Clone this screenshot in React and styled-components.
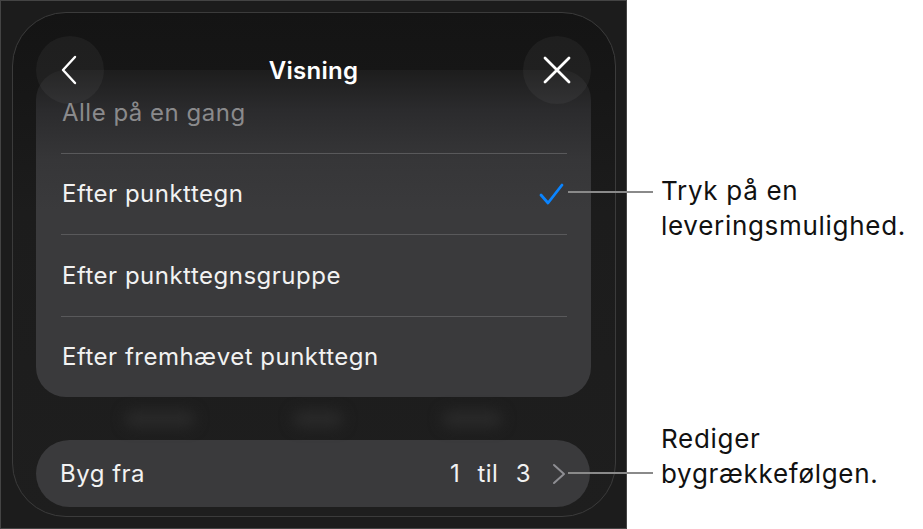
import React from 'react'
import styled, { createGlobalStyle } from 'styled-components'

const Global = createGlobalStyle`
  body {
    margin: 0;
    background: #fff;
    font-family: Inter, 'Noto Sans', sans-serif;
  }
`

const Page = styled.div`
  display: flex;
  width: 923px;
  height: 529px;
  overflow: hidden;
  position: relative;
`

const Stage = styled.div`
  box-sizing: border-box;
  width: 627px;
  height: 529px;
  flex: none;
  background: #1c1c1c;
  border: 1px solid #444;
  padding: 11px;
`

const Sheet = styled.div`
  box-sizing: border-box;
  width: 604px;
  height: 505px;
  border: 1px solid #3b3b3b;
  border-radius: 54px;
  background: linear-gradient(#141414 0px, #161616 60px, #1c1c1c 200px, #1e1e1e 100%);
  padding: 23px 24px 8px 23px;
  display: flex;
  flex-direction: column;
`

const Header = styled.div`
  position: relative;
  z-index: 2;
  height: 68px;
  display: flex;
  align-items: center;
  justify-content: space-between;
`

const RoundButton = styled.div`
  width: 68px;
  height: 68px;
  border-radius: 50%;
  background: rgba(255, 255, 255, 0.045);
  display: flex;
  align-items: center;
  justify-content: center;
`

const Title = styled.div`
  color: #fff;
  font-size: 24px;
  font-weight: 600;
  letter-spacing: 0.3px;
`

const Card = styled.div`
  margin-top: -34px;
  border-radius: 30px;
  background: linear-gradient(#1d1d1d 0px, #2b2b2d 40px, #363638 90px, #3a3a3c 140px);
  display: flex;
  flex-direction: column;
  padding: 0 24px 0 25px;
  height: 327px;
  box-sizing: border-box;
`

const Row = styled.div`
  height: 81px;
  display: flex;
  align-items: center;
  justify-content: space-between;
  padding-left: 1px;
  padding-right: 2px;
  font-size: 24px;
  letter-spacing: 0.5px;
  color: ${p => (p.$dim ? '#8a8a8c' : '#f2f2f2')};
  border-top: ${p => (p.$first ? 'none' : '1px solid #59595b')};
  padding-top: ${p => (p.$first ? '2px' : '0')};
`

const Blur = styled.div`
  height: 43px;
  display: flex;
  justify-content: space-around;
  align-items: center;
  padding: 0 40px;
`

const Blob = styled.div`
  width: ${p => p.$w}px;
  height: 16px;
  border-radius: 8px;
  background: #2a2a2a;
  filter: blur(7px);
`

const BuildButton = styled.div`
  height: 67px;
  border-radius: 34px;
  background: #3a3a3c;
  display: flex;
  align-items: center;
  padding: 0 24px;
  margin-right: 1px;
  font-size: 24px;
  letter-spacing: 0.5px;
  color: #f2f2f2;
`

const BuildLabel = styled.span`
  flex: 1;
`

const Range = styled.span`
  word-spacing: 10px;
  margin-right: 21px;
`

const Notes = styled.div`
  flex: 1;
  padding: 173px 0 0 34px;
  display: flex;
  flex-direction: column;
`

const Callout = styled.div`
  position: relative;
  font-size: 26px;
  letter-spacing: 0.7px;
  line-height: 35px;
  color: #111;
  margin-top: ${p => p.$gap || 0}px;

  &::before {
    content: '';
    position: absolute;
    left: -93px;
    width: 85px;
    height: 2px;
    background: #8a8a8a;
    top: ${p => p.$lineTop}px;
  }
`

const Back = () => (
  <svg width="20" height="30" viewBox="0 0 20 30">
    <path d="M15 2 L3 15 L15 28" fill="none" stroke="#fff" strokeWidth="2.4" strokeLinecap="round" strokeLinejoin="round" />
  </svg>
)

const Close = () => (
  <svg width="30" height="30" viewBox="0 0 30 30">
    <path d="M3 3 L27 27 M27 3 L3 27" fill="none" stroke="#fff" strokeWidth="2.8" strokeLinecap="round" />
  </svg>
)

const Check = () => (
  <svg width="26" height="24" viewBox="0 0 26 24">
    <path d="M2 13 L9 21 L23 3" fill="none" stroke="#0a84ff" strokeWidth="2.8" strokeLinecap="round" strokeLinejoin="round" />
  </svg>
)

const Chevron = () => (
  <svg width="14" height="22" viewBox="0 0 14 22">
    <path d="M2 2 L12 11 L2 20" fill="none" stroke="#8e8e93" strokeWidth="2" strokeLinecap="round" strokeLinejoin="round" />
  </svg>
)

export default function App() {
  return (
    <Page>
      <Global />
      <Stage>
        <Sheet>
          <Header>
            <RoundButton>
              <Back />
            </RoundButton>
            <Title>Visning</Title>
            <RoundButton>
              <Close />
            </RoundButton>
          </Header>
          <Card>
            <Row $first $dim>Alle på en gang</Row>
            <Row>
              Efter punkttegn
              <Check />
            </Row>
            <Row>Efter punkttegnsgruppe</Row>
            <Row>Efter fremhævet punkttegn</Row>
          </Card>
          <Blur>
            <Blob $w={70} />
            <Blob $w={50} />
            <Blob $w={60} />
          </Blur>
          <BuildButton>
            <BuildLabel>Byg fra</BuildLabel>
            <Range>1 til 3</Range>
            <Chevron />
          </BuildButton>
        </Sheet>
      </Stage>
      <Notes>
        <Callout $lineTop={18}>
          Tryk på en
          <br />
          leveringsmulighed.
        </Callout>
        <Callout $gap={178} $lineTop={51}>
          Rediger
          <br />
          bygrækkefølgen.
        </Callout>
      </Notes>
    </Page>
  )
}
